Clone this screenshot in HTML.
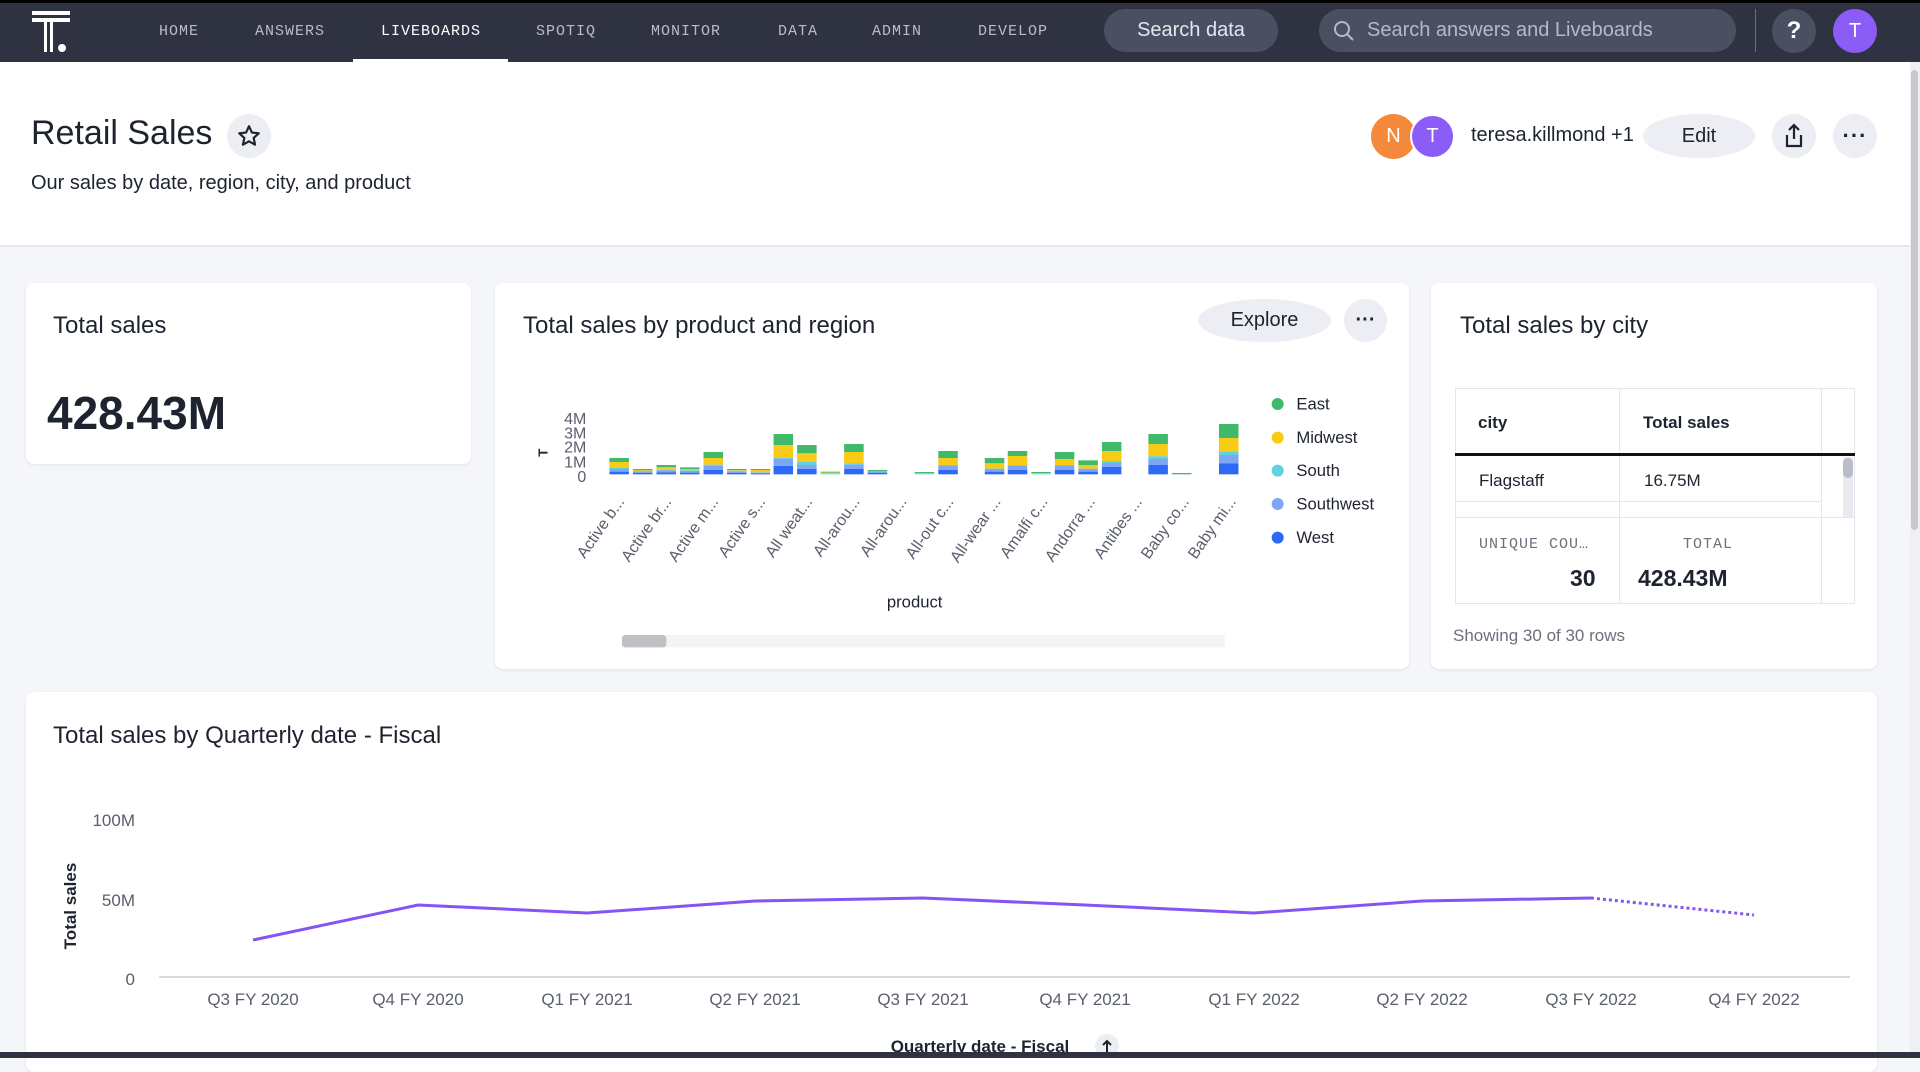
<!DOCTYPE html>
<html><head><meta charset="utf-8"><style>
*{box-sizing:border-box;margin:0;padding:0}
body{width:1920px;height:1058px;overflow:hidden;background:#f5f6fa;font-family:"Liberation Sans",sans-serif;color:#1d232f;position:relative}
.a{position:absolute}
.nav{left:0;top:0;width:1920px;height:62px;background:#2f3241;border-top:3px solid #000}
.ni{top:20px;font-family:"Liberation Mono",monospace;font-size:15px;color:#b9bcc8;letter-spacing:1px}
.pill{border-radius:22px}
.card{background:#fff;border-radius:8px;box-shadow:0 1px 3px rgba(0,0,0,.08)}
.circ{border-radius:50%;display:flex;align-items:center;justify-content:center}
.t20{font-size:24px}
</style></head><body>
<div class="a nav">
 <svg class="a" style="left:32px;top:8px" width="42" height="44" viewBox="0 0 42 44"><rect x="0" y="0" width="38" height="4" fill="#fff"/><rect x="0" y="7" width="38" height="4" fill="#fff"/><rect x="12" y="11" width="3" height="30" fill="#fff"/><rect x="18" y="11" width="3" height="30" fill="#fff"/><circle cx="30" cy="37" r="4" fill="#fff"/></svg>
 <div class="a ni" style="left:159px">HOME</div>
 <div class="a ni" style="left:255px">ANSWERS</div>
 <div class="a ni" style="left:381px;color:#fff">LIVEBOARDS</div>
 <div class="a ni" style="left:536px">SPOTIQ</div>
 <div class="a ni" style="left:651px">MONITOR</div>
 <div class="a ni" style="left:778px">DATA</div>
 <div class="a ni" style="left:872px">ADMIN</div>
 <div class="a ni" style="left:978px">DEVELOP</div>
 <div class="a" style="left:353px;top:56px;width:155px;height:4px;background:#fff"></div>
 <div class="a pill" style="left:1104px;top:6px;width:174px;height:43px;background:#4b4f62;color:#e6e7ee;font-size:20px;text-align:center;line-height:43px">Search data</div>
 <div class="a pill" style="left:1319px;top:6px;width:417px;height:43px;background:#4b4f62;color:#b6b9c6;font-size:20px;line-height:43px;padding-left:48px">Search answers and Liveboards</div>
 <svg class="a" style="left:1333px;top:17px" width="22" height="22" viewBox="0 0 22 22"><circle cx="9" cy="9" r="7" stroke="#b6b9c6" stroke-width="2" fill="none"/><path d="M14 14l6 6" stroke="#b6b9c6" stroke-width="2"/></svg>
 <div class="a" style="left:1755px;top:6px;width:1px;height:43px;background:#6a6e80"></div>
 <div class="a circ" style="left:1772px;top:6px;width:44px;height:44px;background:#4b4f62;color:#fff;font-size:24px;font-weight:bold">?</div>
 <div class="a circ" style="left:1833px;top:6px;width:44px;height:44px;background:#8c5cf6;color:#fff;font-size:20px">T</div>
</div>
<div class="a" style="left:0;top:62px;width:1910px;height:185px;background:#fff;border-bottom:2px solid #e8e9ee"></div>
<div class="a" style="left:1910px;top:62px;width:10px;height:996px;background:#f0f0f2"></div>
<div class="a" style="left:1911px;top:70px;width:7px;height:460px;background:#c6c8ce;border-radius:4px"></div>
<div class="a" style="left:31px;top:114px;font-size:34px;font-weight:500">Retail Sales</div>
<div class="a circ" style="left:227px;top:114px;width:44px;height:44px;background:#eceef4"><svg width="26" height="26" viewBox="0 0 24 24"><path d="M12 3l2.7 5.8 6.3.7-4.7 4.3 1.3 6.2L12 16.9 6.4 20l1.3-6.2L3 9.5l6.3-.7z" fill="none" stroke="#1d232f" stroke-width="2" stroke-linejoin="round"/></svg></div>
<div class="a" style="left:31px;top:172px;font-size:20px">Our sales by date, region, city, and product</div>
<div class="a circ" style="left:1371px;top:114px;width:45px;height:45px;background:#f4893c;color:#fff;font-size:20px">N</div>
<div class="a circ" style="left:1410px;top:114px;width:45px;height:45px;background:#8c5cf6;color:#fff;font-size:20px;border:2px solid #fff">T</div>
<div class="a" style="left:1471px;top:124px;font-size:20px">teresa.killmond +1</div>
<div class="a pill circ" style="left:1643px;top:114px;width:112px;height:44px;background:#eceef4;font-size:20px">Edit</div>
<div class="a circ" style="left:1772px;top:114px;width:44px;height:44px;background:#eceef4"><svg width="22" height="26" viewBox="0 0 22 26"><path d="M11 2v14M6 7l5-5 5 5M4 12v11h14V12" fill="none" stroke="#1d232f" stroke-width="2.2"/></svg></div>
<div class="a circ" style="left:1833px;top:114px;width:44px;height:44px;background:#eceef4;font-size:22px;font-weight:bold;letter-spacing:1px">···</div>

<div class="a card" style="left:26px;top:283px;width:445px;height:181px"></div>
<div class="a t20" style="left:53px;top:312px">Total sales</div>
<div class="a" style="left:47px;top:386px;font-size:46px;font-weight:bold">428.43M</div>

<div class="a card" style="left:495px;top:283px;width:914px;height:386px"></div>
<div class="a t20" style="left:523px;top:312px">Total sales by product and region</div>
<div class="a pill circ" style="left:1198px;top:299px;width:133px;height:43px;background:#eceef4;font-size:20px">Explore</div>
<div class="a circ" style="left:1344px;top:299px;width:43px;height:43px;background:#eceef4;font-size:20px;font-weight:bold">···</div>
<svg class="a" style="left:490px;top:370px" width="900" height="300" viewBox="0 0 2700 900">
<g font-family="Liberation Sans" fill="#5a5f6c" font-size="48" text-anchor="end">
<text x="289" y="162">4M</text><text x="289" y="205">3M</text><text x="289" y="248">2M</text><text x="289" y="292">1M</text><text x="289" y="336">0</text></g>
<text transform="translate(172,248) rotate(-90)" font-family="Liberation Sans" font-size="40" font-weight="bold" text-anchor="middle" fill="#1d232f">T</text>
<g id="bars" transform="scale(1.722,1)"></g>
<g font-family="Liberation Sans" fill="#5a5f6c" font-size="48" text-anchor="end">
<text transform="translate(405,395) rotate(-55)">Active b...</text>
<text transform="translate(546,395) rotate(-55)">Active br...</text>
<text transform="translate(687,395) rotate(-55)">Active m...</text>
<text transform="translate(828,395) rotate(-55)">Active s...</text>
<text transform="translate(969,395) rotate(-55)">All weat...</text>
<text transform="translate(1111,395) rotate(-55)">All-arou...</text>
<text transform="translate(1252,395) rotate(-55)">All-arou...</text>
<text transform="translate(1393,395) rotate(-55)">All-out c...</text>
<text transform="translate(1534,395) rotate(-55)">All-wear ...</text>
<text transform="translate(1675,395) rotate(-55)">Amalfi c...</text>
<text transform="translate(1817,395) rotate(-55)">Andorra ...</text>
<text transform="translate(1958,395) rotate(-55)">Antibes ...</text>
<text transform="translate(2099,395) rotate(-55)">Baby co...</text>
<text transform="translate(2240,395) rotate(-55)">Baby mi...</text>
</g>
<text x="1274" y="712" font-family="Liberation Sans" font-size="50" text-anchor="middle" fill="#1d232f">product</text>
<rect x="396" y="795" width="1808" height="37" fill="#f4f4f6"/><rect x="396" y="795" width="133" height="37" rx="10" fill="#bfc0c4"/>
<g font-family="Liberation Sans" font-size="50" fill="#1d232f">
<circle cx="2363" cy="102" r="18" fill="#40b96b"/><text x="2419" y="118">East</text>
<circle cx="2363" cy="203" r="18" fill="#f8cb16"/><text x="2419" y="219">Midwest</text>
<circle cx="2363" cy="302" r="18" fill="#62d0e2"/><text x="2419" y="318">South</text>
<circle cx="2363" cy="402" r="18" fill="#7ea6f6"/><text x="2419" y="418">Southwest</text>
<circle cx="2363" cy="503" r="18" fill="#2d69f4"/><text x="2419" y="519">West</text>
</g>
</svg>

<div class="a card" style="left:1431px;top:283px;width:446px;height:386px"></div>
<div class="a t20" style="left:1460px;top:312px">Total sales by city</div>
<div class="a" style="left:1455px;top:388px;width:400px;height:216px;border:1px solid #e4e6ee"></div>
<div class="a" style="left:1619px;top:388px;width:1px;height:216px;background:#e4e6ee"></div>
<div class="a" style="left:1821px;top:388px;width:1px;height:216px;background:#e4e6ee"></div>
<div class="a" style="left:1455px;top:453px;width:400px;height:3px;background:#111"></div>
<div class="a" style="left:1455px;top:501px;width:366px;height:1px;background:#e4e6ee"></div>
<div class="a" style="left:1455px;top:517px;width:400px;height:1px;background:#e4e6ee"></div>
<div class="a" style="left:1843px;top:457px;width:10px;height:60px;background:#e8eaf0"></div>
<div class="a" style="left:1843px;top:458px;width:10px;height:20px;background:#b8bec8;border-radius:5px"></div>
<div class="a" style="left:1478px;top:413px;font-size:17px;font-weight:bold">city</div>
<div class="a" style="left:1643px;top:413px;font-size:17px;font-weight:bold">Total sales</div>
<div class="a" style="left:1479px;top:471px;font-size:17px">Flagstaff</div>
<div class="a" style="left:1644px;top:471px;font-size:17px">16.75M</div>
<div class="a" style="left:1479px;top:536px;font-size:15px;font-family:'Liberation Mono',monospace;color:#6b707c;letter-spacing:1px">UNIQUE COU…</div>
<div class="a" style="left:1570px;top:565px;font-size:23px;font-weight:bold">30</div>
<div class="a" style="left:1683px;top:536px;font-size:15px;font-family:'Liberation Mono',monospace;color:#6b707c;letter-spacing:1px">TOTAL</div>
<div class="a" style="left:1638px;top:565px;font-size:23px;font-weight:bold">428.43M</div>
<div class="a" style="left:1453px;top:626px;font-size:17px;color:#6b707c">Showing 30 of 30 rows</div>

<div class="a card" style="left:26px;top:692px;width:1851px;height:380px"></div>
<div class="a t20" style="left:53px;top:722px">Total sales by Quarterly date - Fiscal</div>
<svg class="a" style="left:0;top:692px" width="1900" height="366" viewBox="0 692 1900 366">
<g font-family="Liberation Sans" font-size="17" fill="#5a5f6c" text-anchor="end">
<text x="135" y="826">100M</text><text x="135" y="906">50M</text><text x="135" y="985">0</text></g>
<text transform="translate(76,906) rotate(-90)" font-family="Liberation Sans" font-size="17" font-weight="bold" text-anchor="middle" fill="#1d232f">Total sales</text>
<line x1="159" y1="977" x2="1850" y2="977" stroke="#d8dae0" stroke-width="2"/>
<polyline points="253,940 418,905 587,913 755,901 923,898 1085,905 1254,913 1422,901 1591,898" fill="none" stroke="#8454f4" stroke-width="3"/>
<polyline points="1591,898 1754,915" fill="none" stroke="#8454f4" stroke-width="3" stroke-dasharray="3,3"/>
<g font-family="Liberation Sans" font-size="17" fill="#5a5f6c" text-anchor="middle">
<text x="253" y="1005">Q3 FY 2020</text><text x="418" y="1005">Q4 FY 2020</text><text x="587" y="1005">Q1 FY 2021</text><text x="755" y="1005">Q2 FY 2021</text><text x="923" y="1005">Q3 FY 2021</text><text x="1085" y="1005">Q4 FY 2021</text><text x="1254" y="1005">Q1 FY 2022</text><text x="1422" y="1005">Q2 FY 2022</text><text x="1591" y="1005">Q3 FY 2022</text><text x="1754" y="1005">Q4 FY 2022</text></g>
<text x="980" y="1052" font-family="Liberation Sans" font-size="17" font-weight="bold" text-anchor="middle" fill="#1d232f">Quarterly date - Fiscal</text>
<circle cx="1107" cy="1046" r="12" fill="#eceef4"/><path d="M1107 1052v-11M1103 1045l4-4 4 4" stroke="#1d232f" stroke-width="2" fill="none"/>
</svg>
<div class="a" style="left:0;top:1052px;width:1920px;height:6px;background:#2f3241"></div>
<script>
var d=[[208,264,305,297,293,276],[249,297,309,305,303,301],[290,285,307,301,299,292],[331,292,308,303,301,297],[372,246,300,287,284,264],[413,297,309,305,302,300],[454,297,310,308,307,300],[494,192,288,266,263,225],[535,225,297,285,276,250],[576,305,313,313,311,308],[617,222,297,284,280,246],[658,300,309,306,304,304],[740,306,313,311,310,309],[781,243,300,288,285,264],[862,264,305,297,296,280],[902,243,300,287,285,258],[943,306,313,313,311,309],[984,246,300,288,285,267],[1025,271,305,297,296,285],[1066,216,291,279,273,243],[1147,192,285,267,259,222],[1188,309,313,313,313,313],[1270,162,280,255,246,204]];
var c=["#40b96b","#f8cb16","#62d0e2","#7ea6f6","#2d69f4"],s="";
d.forEach(function(b){var x=b[0],t=b[1],w=b[2],sw=b[3],so=b[4],m=b[5];
var seg=[[t,m,0],[m,so,1],[so,sw,2],[sw,w,3],[w,313,4]];
seg.forEach(function(g){if(g[1]>g[0])s+='<rect x="'+x+'" y="'+g[0]+'" width="34" height="'+(g[1]-g[0])+'" fill="'+c[g[2]]+'"/>';});});
document.getElementById("bars").innerHTML=s;
</script>
</body></html>
